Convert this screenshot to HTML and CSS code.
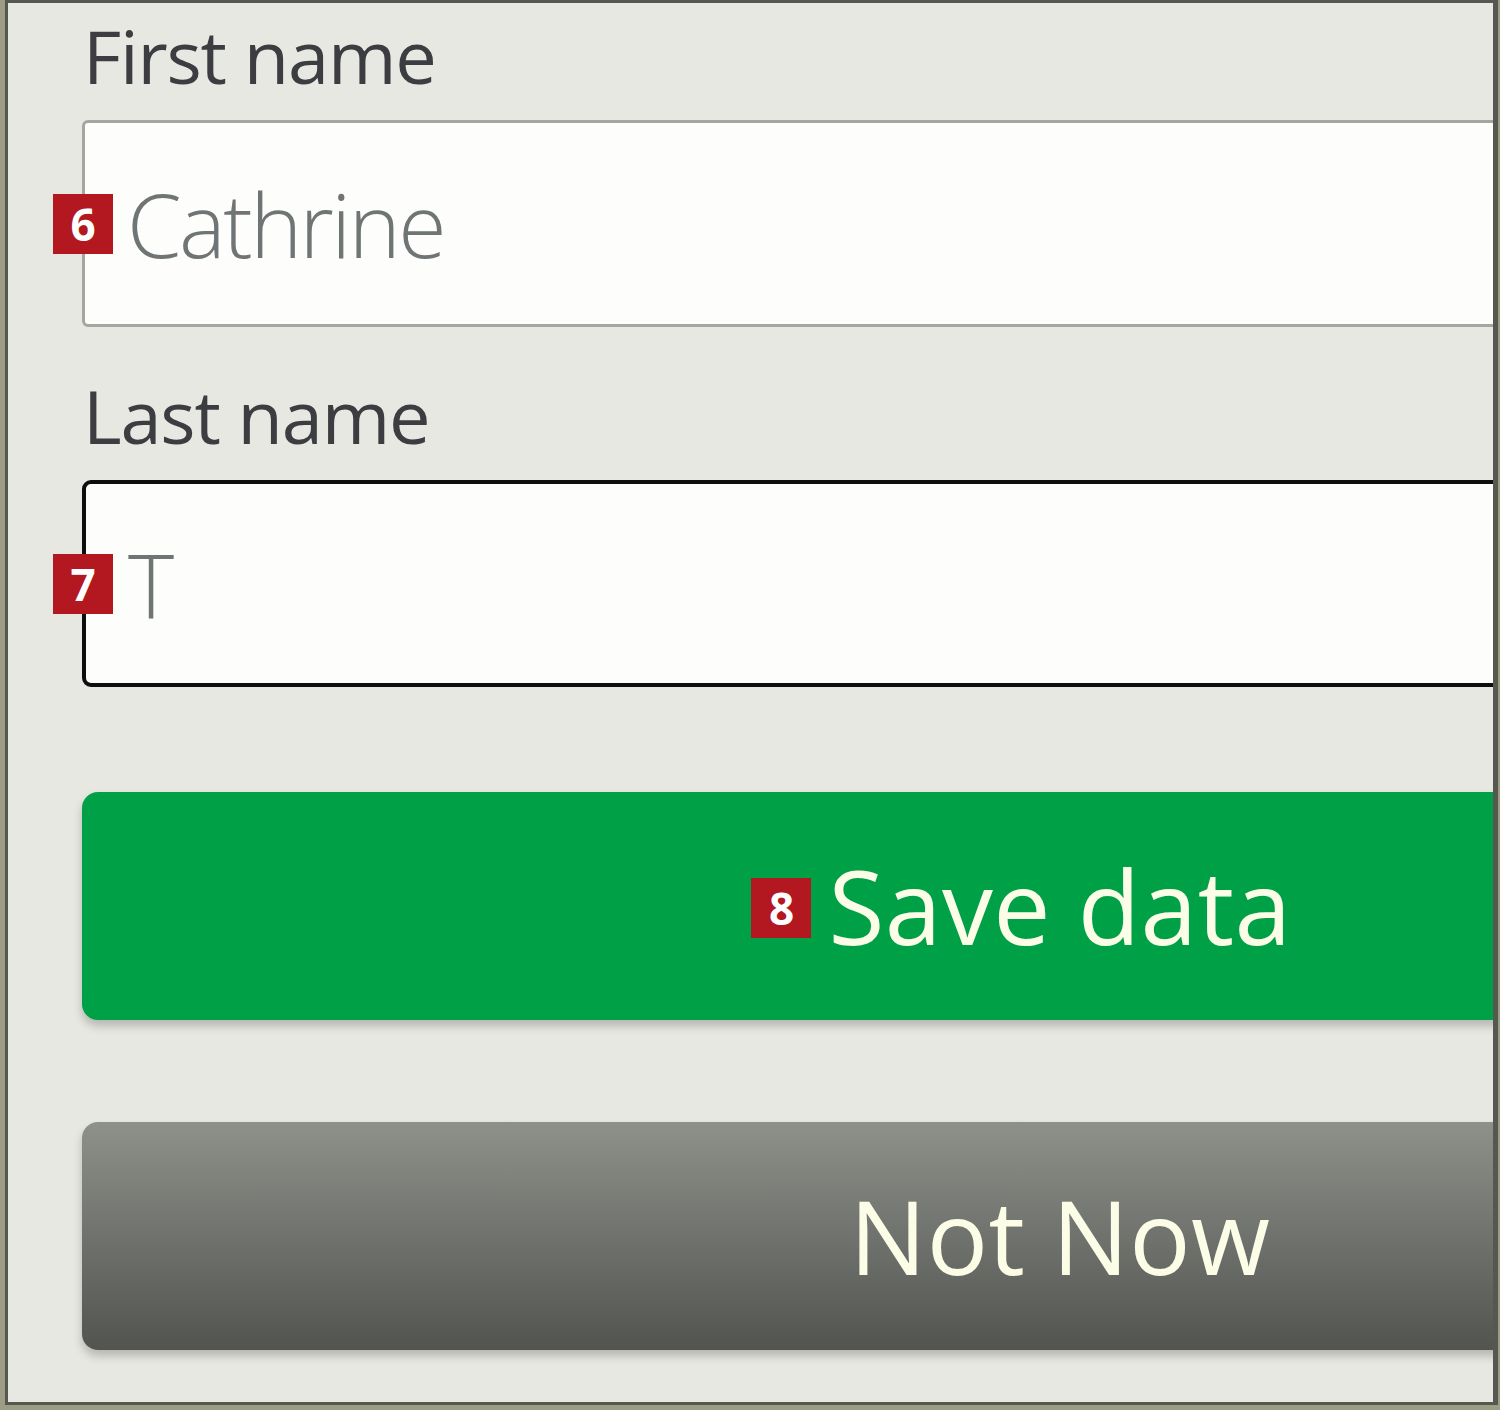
FILE: index.html
```html
<!DOCTYPE html>
<html lang="en">
<head>
<meta charset="utf-8">
<title>Edit name</title>
<link rel="stylesheet" href="styles.css">
</head>
<body>
<div class="panel">
  <div class="form">
    <div class="label">First name</div>
    <div class="field">
      <span class="badge">6</span>
      <span class="value">Cathrine</span>
    </div>
    <div class="label label-second">Last name</div>
    <div class="field field-focus">
      <span class="badge">7</span>
      <span class="value">T</span>
    </div>
    <div class="btn btn-save"><span class="btn-text"><span class="badge badge-btn">8</span>Save data</span></div>
    <div class="btn btn-cancel"><span class="btn-text">Not Now</span></div>
  </div>
</div>
</body>
</html>
```
FILE: styles.css
```css
html, body {
  margin: 0;
  padding: 0;
}
body {
  width: 1500px;
  height: 1410px;
  background: #9d9d86;
  overflow: hidden;
  font-family: "Open Sans", "Noto Sans", sans-serif;
}
.panel {
  box-sizing: border-box;
  margin-left: 5px;
  width: 1493px;
  height: 1405px;
  border: 3px solid #55584f;
  border-right-width: 5px;
  background: #e8e8e3;
  overflow: hidden;
}
.form {
  width: 1956px;
  padding: 3px 0 0 74px;
  display: flex;
  flex-direction: column;
}
.label {
  font-size: 74px;
  line-height: 100px;
  color: #3b3d40;
  letter-spacing: -1.2px;
  padding-left: 1px;
}
.label-second {
  margin-top: 39px;
}
.field {
  position: relative;
  box-sizing: border-box;
  margin-top: 14px;
  height: 207px;
  background: #fdfdfb;
  border: 3px solid #a4a6a0;
  border-radius: 6px;
  display: flex;
  align-items: center;
  padding-left: 42px;
}
.field-focus {
  border: 4px solid #0e0e0e;
  border-radius: 9px;
  padding-left: 42px;
}
.value {
  font-size: 88px;
  font-weight: 300;
  color: #6f7474;
  letter-spacing: -2.5px;
  line-height: 1;
}
.badge {
  position: absolute;
  left: -32px;
  top: 50%;
  margin-top: -30px;
  width: 60px;
  height: 60px;
  background: #b3171f;
  color: #ffffff;
  font-size: 44px;
  font-weight: 700;
  line-height: 60px;
  text-align: center;
  letter-spacing: 0;
}
.field-focus .badge {
  left: -33px;
}
.btn {
  box-sizing: border-box;
  height: 228px;
  border-radius: 16px;
  display: flex;
  align-items: center;
  justify-content: center;
  box-shadow: 0 6px 10px rgba(0, 0, 0, 0.22);
}
.btn-save {
  margin-top: 105px;
  background: #00a046;
}
.btn-cancel {
  margin-top: 102px;
  background: linear-gradient(to bottom, #8e908a 0%, #737570 45%, #51544f 100%);
}
.btn-text {
  position: relative;
  font-size: 102px;
  color: #fcfde6;
  line-height: 1;
  letter-spacing: 0.4px;
}
.badge-btn {
  left: auto;
  right: 100%;
  margin-right: 17px;
  margin-top: -28px;
}
```
